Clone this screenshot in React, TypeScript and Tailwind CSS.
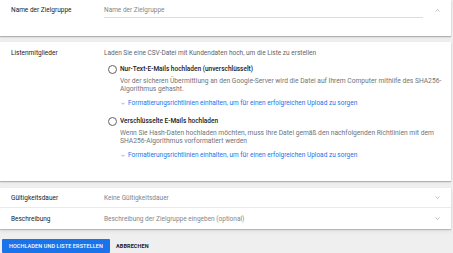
import React from 'react';

function ChevronUp({ className }: { className?: string }) {
  return (
    <svg viewBox="0 0 10 6" className={className} fill="none" stroke="currentColor" strokeWidth="1.3">
      <path d="M1 5 L5 1 L9 5" />
    </svg>
  );
}

function ChevronDown({ className }: { className?: string }) {
  return (
    <svg viewBox="0 0 10 6" className={className} fill="none" stroke="currentColor" strokeWidth="1.3">
      <path d="M1 1 L5 5 L9 1" />
    </svg>
  );
}

function RadioOption({ title, lines }: { title: string; lines: string[] }) {
  return (
    <div className="flex flex-col">
      <div className="flex items-center h-[8px]">
        <div className="w-[9px] h-[9px] rounded-full border border-[#5f6368] bg-white" />
        <span className="ml-[3px] font-medium text-[#202124]">{title}</span>
      </div>
      <div className="ml-[12px] mt-[4px] text-[6.7px] text-[#70757a] whitespace-nowrap">
        {lines.map((l) => (
          <div key={l}>{l}</div>
        ))}
      </div>
      <div className="ml-[13px] mt-[6px] flex items-center text-[#1a73e8]">
        <ChevronDown className="w-[4px] h-[3px] mr-[3px]" />
        <span>Formatierungsrichtlinien einhalten, um für einen erfolgreichen Upload zu sorgen</span>
      </div>
    </div>
  );
}

export default function App() {
  return (
    <div
      className="w-[453px] h-[253px] overflow-hidden bg-[#efefef] text-[6.5px] leading-[8px]"
      style={{ fontFamily: 'Roboto, "Liberation Sans", sans-serif' }}
    >
      <div className="w-[451px]">
        {/* Name der Zielgruppe */}
        <div className="bg-white h-[36px] flex items-start pt-[6px] shadow-[0_1px_1px_rgba(0,0,0,0.22),0_1px_3px_rgba(0,0,0,0.08)]">
          <div className="w-[104px] pl-[11px] text-[#202124]">Name der Zielgruppe</div>
          <div className="w-[319px] border-b border-[#dadce0] pb-[3px] text-[#80868b]">Name der Zielgruppe</div>
          <div className="flex-1 flex justify-end pr-[11px] pt-[3px]">
            <ChevronUp className="w-[5px] h-[3px] text-[#9aa0a6]" />
          </div>
        </div>

        {/* Listenmitglieder */}
        <div className="mt-[6px] bg-white h-[139px] flex items-start pt-[7px] shadow-[0_1px_1px_rgba(0,0,0,0.22),0_1px_3px_rgba(0,0,0,0.08)]">
          <div className="w-[104px] pl-[11px] text-[#202124]">Listenmitglieder</div>
          <div className="flex-1 flex flex-col">
            <div className="text-[#5f6368]">Laden Sie eine CSV-Datei mit Kundendaten hoch, um die Liste zu erstellen</div>
            <div className="ml-[4px] mt-[8px] flex flex-col gap-[10px]">
              <RadioOption
                title="Nur-Text-E-Mails hochladen (unverschlüsselt)"
                lines={[
                  'Vor der sicheren Übermittlung an den Google-Server wird die Datei auf Ihrem Computer mithilfe des SHA256-',
                  'Algorithmus gehasht.',
                ]}
              />
              <RadioOption
                title="Verschlüsselte E-Mails hochladen"
                lines={[
                  'Wenn Sie Hash-Daten hochladen möchten, muss Ihre Datei gemäß den nachfolgenden Richtlinien mit dem',
                  'SHA256-Algorithmus vorformatiert werden',
                ]}
              />
            </div>
          </div>
        </div>

        {/* Gültigkeitsdauer / Beschreibung */}
        <div className="mt-[7px] bg-white shadow-[0_1px_1px_rgba(0,0,0,0.18),0_2px_4px_rgba(0,0,0,0.08)]">
          <div className="h-[20px] flex items-center border-b border-[#e8eaed]">
            <div className="w-[104px] pl-[11px] text-[#202124]">Gültigkeitsdauer</div>
            <div className="flex-1 text-[#80868b]">Keine Gültigkeitsdauer</div>
            <ChevronDown className="w-[5px] h-[3px] mr-[11px] text-[#9aa0a6]" />
          </div>
          <div className="h-[21px] flex items-center">
            <div className="w-[104px] pl-[11px] text-[#202124]">Beschreibung</div>
            <div className="flex-1 text-[#80868b]">Beschreibung der Zielgruppe eingeben (optional)</div>
            <ChevronDown className="w-[5px] h-[3px] mr-[11px] text-[#9aa0a6]" />
          </div>
        </div>

        {/* Buttons */}
        <div className="mt-[10px] pl-[2px] flex items-center">
          <button className="h-[14px] w-[108px] bg-[#1a73e8] text-white text-[5.5px] font-medium tracking-[0.1px] rounded-[1px] flex items-center justify-center">
            HOCHLADEN UND LISTE ERSTELLEN
          </button>
          <button className="ml-[6px] h-[14px] text-[#202124] text-[5.5px] font-bold tracking-[0.1px]">ABBRECHEN</button>
        </div>
      </div>
    </div>
  );
}
